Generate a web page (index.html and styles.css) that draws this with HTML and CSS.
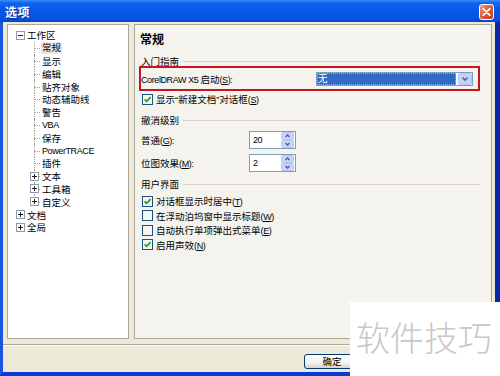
FILE: index.html
```html
<!DOCTYPE html>
<html lang="zh-CN">

<head>
  <meta charset="UTF-8" />
  <meta name="viewport" content="width=device-width, initial-scale=1.0" />
  <title>选项</title>
  <link rel="stylesheet" href="styles.css">
</head>

<body>
  <div class="window">
    <div class="titlebar">
      <span class="title">选项</span>
      <span class="close">
        <svg width="15" height="16" viewBox="0 0 15 16">
          <defs>
            <linearGradient id="cg" x1="0" y1="0" x2="1" y2="1">
              <stop offset="0" stop-color="#F0A088" />
              <stop offset="0.5" stop-color="#E05A3A" />
              <stop offset="1" stop-color="#C2381E" />
            </linearGradient>
          </defs>
          <rect x="0.5" y="0.5" width="14" height="15" rx="2.5" fill="url(#cg)" stroke="#fff" />
          <path d="M4.3 4.8 L10.7 11.2 M10.7 4.8 L4.3 11.2" stroke="#fff" stroke-width="1.8" stroke-linecap="round" />
        </svg>
      </span>
    </div>

    <div class="frame">
      <div class="panes">
        <!-- 左侧树 -->
        <div class="tree">
          <div class="node root"><svg class="box" width="9" height="9"><rect x="0.5" y="0.5" width="8" height="8" fill="#fff" stroke="#8F9BA8" /><path d="M2 4.5h5" stroke="#1E1E1E" /></svg><span>工作区</span></div>
          <div class="node child"><span class="sel">常规</span></div>
          <div class="node child"><span>显示</span></div>
          <div class="node child"><span>编辑</span></div>
          <div class="node child"><span>贴齐对象</span></div>
          <div class="node child"><span>动态辅助线</span></div>
          <div class="node child"><span>警告</span></div>
          <div class="node child"><span class="en">VBA</span></div>
          <div class="node child"><span>保存</span></div>
          <div class="node child"><span class="en">PowerTRACE</span></div>
          <div class="node child"><span>插件</span></div>
          <div class="node child folder"><svg class="box" width="9" height="9"><rect x="0.5" y="0.5" width="8" height="8" fill="#fff" stroke="#8F9BA8" /><path d="M2 4.5h5M4.5 2v5" stroke="#1E1E1E" /></svg><span>文本</span></div>
          <div class="node child folder"><svg class="box" width="9" height="9"><rect x="0.5" y="0.5" width="8" height="8" fill="#fff" stroke="#8F9BA8" /><path d="M2 4.5h5M4.5 2v5" stroke="#1E1E1E" /></svg><span>工具箱</span></div>
          <div class="node child folder last"><svg class="box" width="9" height="9"><rect x="0.5" y="0.5" width="8" height="8" fill="#fff" stroke="#8F9BA8" /><path d="M2 4.5h5M4.5 2v5" stroke="#1E1E1E" /></svg><span>自定义</span></div>
          <div class="node root"><svg class="box" width="9" height="9"><rect x="0.5" y="0.5" width="8" height="8" fill="#fff" stroke="#8F9BA8" /><path d="M2 4.5h5M4.5 2v5" stroke="#1E1E1E" /></svg><span>文档</span></div>
          <div class="node root"><svg class="box" width="9" height="9"><rect x="0.5" y="0.5" width="8" height="8" fill="#fff" stroke="#8F9BA8" /><path d="M2 4.5h5M4.5 2v5" stroke="#1E1E1E" /></svg><span>全局</span></div>
        </div>

        <!-- 右侧设置页 -->
        <div class="page">
          <div class="page-title">常规</div>

          <div class="group g-start">入门指南</div>
          <div class="highlight">
            <span><span class="en">CorelDRAW X5 </span>启动<span class="en">(<u>S</u>):</span></span>
            <div class="combo">
              <span class="combo-value">无</span>
              <span class="combo-arrow">
                <svg width="14" height="12" viewBox="0 0 14 12">
                  <rect x="0.5" y="0.5" width="13" height="11" rx="1.5" fill="#C3D4FB" stroke="#B1C5F2" />
                  <path d="M4.5 4.5 L7 7 L9.5 4.5" fill="none" stroke="#4D6185" stroke-width="1.6" />
                </svg>
              </span>
            </div>
          </div>
          <label class="check c-first">
            <svg class="cb" width="11" height="11"><rect x="0.5" y="0.5" width="10" height="10" fill="#F4F4F0" stroke="#1C5180" /><path d="M2.6 5.4 L4.6 7.4 L8.6 3.2" fill="none" stroke="#21A121" stroke-width="1.7" /></svg>
            <span>显示“新建文档”对话框<span class="en">(<u>S</u>)</span></span>
          </label>

          <div class="group g-undo">撤消级别</div>
          <div class="spin-row sr-first">
            <span class="spin-label">普通<span class="en">(<u>G</u>):</span></span>
            <div class="spin">
              <span class="spin-value en">20</span>
              <svg class="spin-btns" width="13" height="16" viewBox="0 0 13 16">
                <rect x="0.5" y="0.5" width="12" height="7" rx="1" fill="#C6D5F9" stroke="#B4C6F0" />
                <rect x="0.5" y="8.5" width="12" height="7" rx="1" fill="#C6D5F9" stroke="#B4C6F0" />
                <path d="M4.5 5 L6.5 3 L8.5 5 M4.5 11 L6.5 13 L8.5 11" fill="none" stroke="#4D6185" stroke-width="1.3" />
              </svg>
            </div>
          </div>
          <div class="spin-row sr-second">
            <span class="spin-label">位图效果<span class="en">(<u>M</u>):</span></span>
            <div class="spin">
              <span class="spin-value en">2</span>
              <svg class="spin-btns" width="13" height="16" viewBox="0 0 13 16">
                <rect x="0.5" y="0.5" width="12" height="7" rx="1" fill="#C6D5F9" stroke="#B4C6F0" />
                <rect x="0.5" y="8.5" width="12" height="7" rx="1" fill="#C6D5F9" stroke="#B4C6F0" />
                <path d="M4.5 5 L6.5 3 L8.5 5 M4.5 11 L6.5 13 L8.5 11" fill="none" stroke="#4D6185" stroke-width="1.3" />
              </svg>
            </div>
          </div>

          <div class="group g-ui">用户界面</div>
          <div class="checks">
            <label class="check">
              <svg class="cb" width="11" height="11"><rect x="0.5" y="0.5" width="10" height="10" fill="#F4F4F0" stroke="#1C5180" /><path d="M2.6 5.4 L4.6 7.4 L8.6 3.2" fill="none" stroke="#21A121" stroke-width="1.7" /></svg>
              <span>对话框显示时居中<span class="en">(<u>T</u>)</span></span>
            </label>
            <label class="check">
              <svg class="cb" width="11" height="11"><rect x="0.5" y="0.5" width="10" height="10" fill="#F4F4F0" stroke="#1C5180" /></svg>
              <span>在浮动泊坞窗中显示标题<span class="en">(<u>W</u>)</span></span>
            </label>
            <label class="check">
              <svg class="cb" width="11" height="11"><rect x="0.5" y="0.5" width="10" height="10" fill="#F4F4F0" stroke="#1C5180" /></svg>
              <span>自动执行单项弹出式菜单<span class="en">(<u>E</u>)</span></span>
            </label>
            <label class="check">
              <svg class="cb" width="11" height="11"><rect x="0.5" y="0.5" width="10" height="10" fill="#F4F4F0" stroke="#1C5180" /><path d="M2.6 5.4 L4.6 7.4 L8.6 3.2" fill="none" stroke="#21A121" stroke-width="1.7" /></svg>
              <span>启用声效<span class="en">(<u>N</u>)</span></span>
            </label>
          </div>
        </div>
      </div>

      <div class="sep"></div>
      <div class="buttons">
        <button class="btn">确定</button>
      </div>
    </div>

    <div class="watermark">软件技巧</div>
  </div>
</body>

</html>
```

FILE: styles.css
```css
* {
  box-sizing: border-box;
}

body {
  margin: 0;
  font-family: "Liberation Sans", "Noto Sans CJK SC", sans-serif;
  font-size: 9.5px;
  color: #000;
}

.window {
  position: relative;
  width: 500px;
  height: 376px;
  overflow: hidden;
  display: flex;
  flex-direction: column;
}

/* 标题栏 */
.titlebar {
  height: 22px;
  display: flex;
  align-items: center;
  justify-content: space-between;
  padding: 0 6px 0 5px;
  background: linear-gradient(to bottom, #3D8DF7 0%, #0F64EC 14%, #0558E6 50%, #0454E2 86%, #0243CF 100%);
}

.titlebar .title {
  color: #fff;
  font-weight: bold;
  font-size: 12px;
  letter-spacing: 0.5px;
  text-shadow: 1px 1px 0 #0A2C8C;
}

.titlebar .close {
  display: flex;
  margin-top: 2px;
}

/* 窗口主体 */
.frame {
  flex: 1;
  display: flex;
  flex-direction: column;
  background: #ECE9D8;
  border-left: 3px solid #1856DE;
  border-right: 5px solid #0628A8;
  border-bottom: 4px solid #0A3CD4;
}

.panes {
  display: flex;
  gap: 5px;
  height: 315px;
  margin: 2px 3px 0 4px;
}

/* 树 */
.tree {
  width: 122px;
  background: #fff;
  border: 1px solid #ACA899;
  padding-top: 4px;
}

.node {
  position: relative;
  height: 12.8px;
  display: flex;
  align-items: center;
  white-space: nowrap;
}

.node .box {
  display: block;
  flex: none;
  position: relative;
  z-index: 1;
}

.node.root {
  padding-left: 8px;
}

.node.root .box {
  margin-right: 2px;
}

.node.child {
  padding-left: 34px;
}

.node.child::before {
  content: "";
  position: absolute;
  left: 26px;
  top: 0;
  bottom: 0;
  border-left: 1px dotted #A0A0A0;
}

.node.child.last::before {
  bottom: 50%;
}

.node.child::after {
  content: "";
  position: absolute;
  left: 26px;
  top: 50%;
  width: 6px;
  border-top: 1px dotted #A0A0A0;
}

.node.folder {
  padding-left: 22px;
}

.node.folder .box {
  margin-right: 3px;
}

.node .sel {
  background: #E9E9E9;
  margin-left: -1px;
  padding: 0 1px;
  line-height: 12px;
}

/* 右侧页面 */
.page {
  flex: 1;
  background: #F4F3EE;
  border: 1px solid #ACA899;
  padding: 7px 11px 0 5px;
  display: flex;
  flex-direction: column;
}

.page-title {
  height: 16px;
  line-height: 16px;
  font-size: 12px;
  font-weight: bold;
}

.group {
  display: flex;
  align-items: center;
  height: 14px;
  padding-left: 1px;
  white-space: nowrap;
}

.group::after {
  content: "";
  flex: 1;
  border-top: 1px solid #D6D3C4;
  margin-left: 4px;
}

.g-start {
  margin-top: 6px;
}

.g-undo {
  margin-top: 7px;
}

.g-ui {
  margin-top: 5px;
}

.highlight {
  height: 25px;
  margin: -2px 0 0 -1px;
  border: 2px solid #C8141E;
  display: flex;
  align-items: center;
  justify-content: space-between;
  padding: 0 5px 0 0;
  white-space: nowrap;
}

.combo {
  width: 157px;
  height: 14px;
  border: 1px solid #7F9DB9;
  background: #fff;
  display: flex;
  align-items: center;
}

.combo-value {
  flex: 1;
  height: 12px;
  line-height: 12px;
  background: #316AC5;
  color: #fff;
  padding-left: 1px;
  outline: 1px dotted #9DB4DE;
  outline-offset: -1px;
}

.combo-arrow {
  display: flex;
  margin-left: 2px;
}

.check {
  display: flex;
  align-items: center;
  gap: 3px;
  height: 14px;
  padding-left: 2px;
  white-space: nowrap;
}

.check .cb {
  display: block;
  flex: none;
}

.c-first {
  margin-top: 1px;
}

.checks {
  margin-top: 3px;
}

.checks .check {
  height: 14.5px;
}

.spin-row {
  display: flex;
  align-items: center;
  height: 18px;
  padding-left: 1px;
}

.sr-first {
  margin-top: 4px;
}

.sr-second {
  margin-top: 5px;
}

.spin-label {
  width: 108px;
  white-space: nowrap;
}

.spin {
  width: 47px;
  height: 18px;
  border: 1px solid #7F9DB9;
  background: #fff;
  display: flex;
  align-items: center;
  padding-right: 1px;
}

.spin-value {
  flex: 1;
  padding-left: 3px;
}

.spin-btns {
  display: block;
}

.en {
  font-size: 9px;
  letter-spacing: -0.4px;
}

/* 底部按钮 */
.sep {
  margin: 5px 0 0 0;
  border-top: 1px solid #ACA899;
  border-bottom: 1px solid #fff;
}

.buttons {
  display: flex;
  padding: 8px 0 0 301px;
}

.btn {
  width: 56px;
  height: 15px;
  padding: 0;
  font-family: inherit;
  font-size: 9.5px;
  line-height: 13px;
  border: 1px solid #003C74;
  border-radius: 3px;
  background: linear-gradient(to bottom, #FFFFFF 0%, #F4F3EE 60%, #D8D2C6 100%);
  color: #000;
}

/* 水印 */
.watermark {
  position: absolute;
  right: 0;
  bottom: 0;
  width: 150px;
  height: 74px;
  background: #fff;
  padding: 18px 0 0 6px;
  font-family: "Noto Sans CJK SC", sans-serif;
  font-size: 34px;
  font-weight: 300;
  line-height: 34px;
  color: #C8C8C8;
  white-space: nowrap;
}
```
